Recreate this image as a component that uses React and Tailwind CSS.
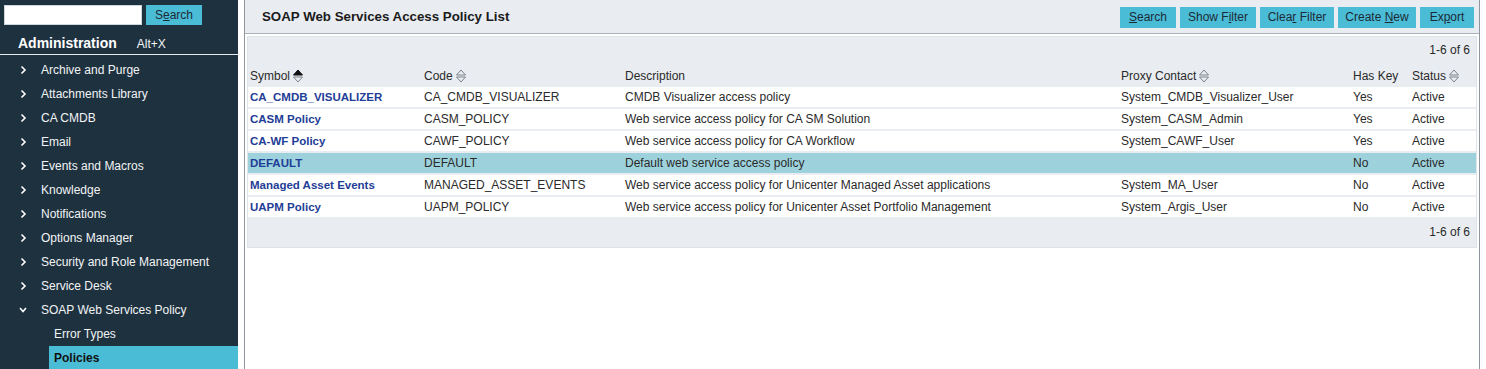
import React from "react";

const F = { fontFamily: '"Liberation Sans", Arial, sans-serif' };

function Chevron({ down }) {
  return (
    <svg width="8" height="10" viewBox="0 0 8 10" className="shrink-0">
      {down ? (
        <path d="M1 3 L4 6.5 L7 3" stroke="#fff" strokeWidth="1.6" fill="none" />
      ) : (
        <path d="M2.5 1.5 L6 5 L2.5 8.5" stroke="#fff" strokeWidth="1.6" fill="none" />
      )}
    </svg>
  );
}

function SortIcon({ active }) {
  return (
    <svg width="12" height="16" viewBox="0 0 12 16" className="ml-[2px] shrink-0">
      <path
        d="M1.5 7 L6 2 L10.5 7 Z"
        fill={active ? "#111" : "none"}
        stroke={active ? "#111" : "#7d838a"}
        strokeWidth="1"
      />
      <path d="M1.5 9 L6 14 L10.5 9 Z" fill="none" stroke="#7d838a" strokeWidth="1" />
    </svg>
  );
}

const menu = [
  "Archive and Purge",
  "Attachments Library",
  "CA CMDB",
  "Email",
  "Events and Macros",
  "Knowledge",
  "Notifications",
  "Options Manager",
  "Security and Role Management",
  "Service Desk",
];

const rows = [
  ["CA_CMDB_VISUALIZER", "CA_CMDB_VISUALIZER", "CMDB Visualizer access policy", "System_CMDB_Visualizer_User", "Yes", "Active"],
  ["CASM Policy", "CASM_POLICY", "Web service access policy for CA SM Solution", "System_CASM_Admin", "Yes", "Active"],
  ["CA-WF Policy", "CAWF_POLICY", "Web service access policy for CA Workflow", "System_CAWF_User", "Yes", "Active"],
  ["DEFAULT", "DEFAULT", "Default web service access policy", "", "No", "Active"],
  ["Managed Asset Events", "MANAGED_ASSET_EVENTS", "Web service access policy for Unicenter Managed Asset applications", "System_MA_User", "No", "Active"],
  ["UAPM Policy", "UAPM_POLICY", "Web service access policy for Unicenter Asset Portfolio Management", "System_Argis_User", "No", "Active"],
];

const cols = "grid grid-cols-[174px_201px_496px_232px_59px_1fr]";

function Btn({ pre, u, post, w }) {
  return (
    <button className={`h-[21px] bg-[#4bbcd6] text-[12px] text-[#1c2a36] ${w}`}>
      {pre}
      <span className="underline">{u}</span>
      {post}
    </button>
  );
}

export default function App() {
  return (
    <div className="flex h-[369px] w-[1486px] overflow-hidden bg-white" style={F}>
      {/* Sidebar */}
      <div className="flex w-[238px] shrink-0 flex-col bg-[#1e313f] text-[#f2f4f5]">
        <div className="flex items-center gap-[4px] pl-[4px] pt-[5px]">
          <div className="h-[20px] w-[138px] border border-[#cfd6dc] bg-white" />
          <button className="h-[20px] w-[56px] bg-[#4bbcd6] text-[12px] text-[#1c2a36]">
            S<span className="underline">e</span>arch
          </button>
        </div>
        <div className="flex h-[30px] items-center border-b border-[#e6e9ec] pl-[18px] pt-[8px]">
          <span className="text-[14px] font-bold text-white">Administration</span>
          <span className="ml-[20px] text-[12px]">Alt+X</span>
        </div>
        <div className="flex flex-col pt-[3px]">
          {menu.map((m) => (
            <div key={m} className="flex h-[24px] items-center pl-[19px] text-[12px]">
              <div className="w-[22px]">
                <Chevron />
              </div>
              <span>{m}</span>
            </div>
          ))}
          <div className="flex h-[24px] items-center pl-[19px] text-[12px]">
            <div className="w-[22px]">
              <Chevron down />
            </div>
            <span>SOAP Web Services Policy</span>
          </div>
          <div className="flex h-[24px] items-center pl-[54px] text-[12px]">Error Types</div>
          <div className="ml-[49px] flex h-[24px] items-center bg-[#4bbcd6] pl-[5px] text-[12px] font-bold text-[#111]">
            Policies
          </div>
        </div>
      </div>

      {/* Main panel */}
      <div className="ml-[6px] flex w-[1236px] shrink-0 flex-col border-x border-[#8f969d] text-[12px] text-[#2a2a2a]">
        <div className="flex h-[34px] shrink-0 items-center justify-between border-b border-[#a9b1b9] bg-[#e9ecf0] pl-[17px] pr-[5px] pt-[1px]">
          <span className="text-[13.3px] font-bold text-[#1b1b1b]">SOAP Web Services Access Policy List</span>
          <div className="flex gap-[4px]">
            <Btn w="w-[56px]" pre="" u="S" post="earch" />
            <Btn w="w-[76px]" pre="Show F" u="i" post="lter" />
            <Btn w="w-[74px]" pre="Clea" u="r" post=" Filter" />
            <Btn w="w-[78px]" pre="Create " u="N" post="ew" />
            <Btn w="w-[54px]" pre="Ex" u="p" post="ort" />
          </div>
        </div>
        <div className="pl-[2px] pr-[2px] pt-[2px]">
          <div className="border border-[#dfe3e7] bg-[#e9ecf0]">
            <div className="flex h-[26px] items-center justify-end pr-[6px]">1-6 of 6</div>
            <div className={`${cols} h-[24px] items-center pl-[2px] pt-[1px]`}>
              <div className="flex items-center">Symbol<SortIcon active /></div>
              <div className="flex items-center">Code<SortIcon /></div>
              <div>Description</div>
              <div className="flex items-center">Proxy Contact<SortIcon /></div>
              <div>Has Key</div>
              <div className="flex items-center">Status<SortIcon /></div>
            </div>
            <div className="flex flex-col gap-[2px]">
              {rows.map((r, i) => (
                <div
                  key={r[0]}
                  className={`${cols} h-[20px] pl-[2px] leading-[20px] ${i === 3 ? "bg-[#9dd2dc]" : "bg-white"}`}
                >
                  <div className="text-[11.5px] font-bold leading-[20px] text-[#1e3d96]">{r[0]}</div>
                  <div>{r[1]}</div>
                  <div>{r[2]}</div>
                  <div>{r[3]}</div>
                  <div>{r[4]}</div>
                  <div>{r[5]}</div>
                </div>
              ))}
            </div>
            <div className="flex h-[30px] items-center justify-end pr-[6px]">1-6 of 6</div>
          </div>
        </div>
      </div>
    </div>
  );
}
